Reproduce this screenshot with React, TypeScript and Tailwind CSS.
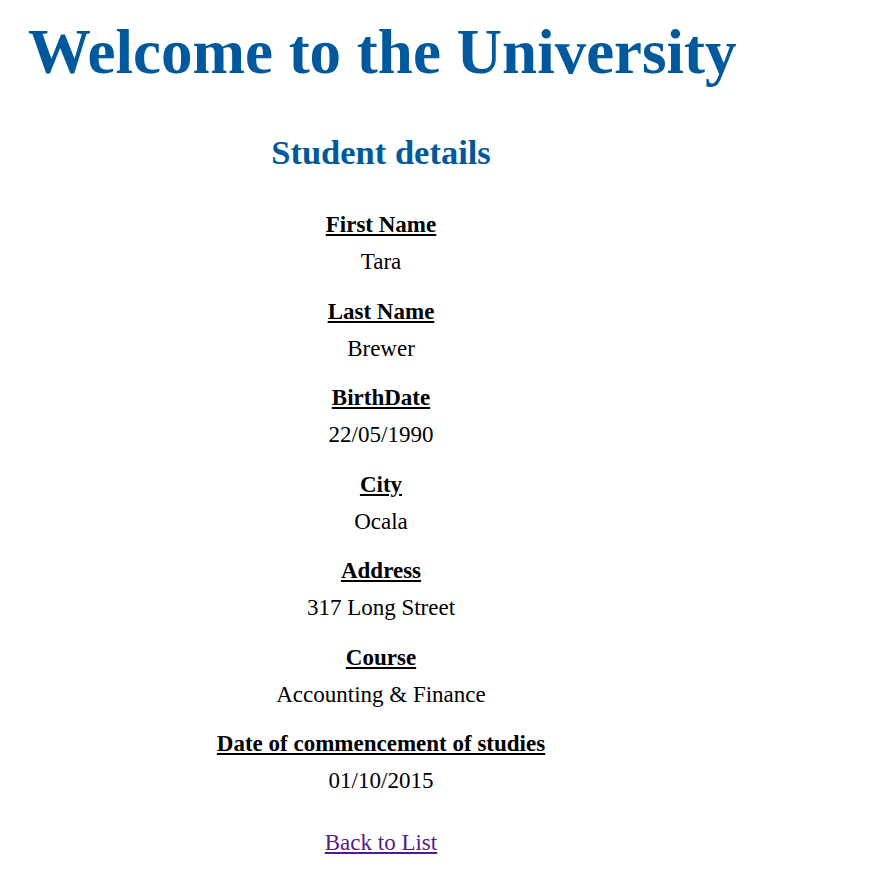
const details = [
  { label: "First Name", value: "Tara" },
  { label: "Last Name", value: "Brewer" },
  { label: "BirthDate", value: "22/05/1990" },
  { label: "City", value: "Ocala" },
  { label: "Address", value: "317 Long Street" },
  { label: "Course", value: "Accounting & Finance" },
  { label: "Date of commencement of studies", value: "01/10/2015" },
];

export default function App() {
  return (
    <div className="min-h-screen bg-white font-['Liberation_Serif',serif] text-black">
      <h1 className="pl-[28px] pt-[12px] text-[63px] font-bold leading-[80px] text-[#00599c]">
        Welcome to the University
      </h1>
      <div className="w-[762px] text-center">
        <h2 className="mt-[40px] text-[34.5px] font-bold leading-[40px] text-[#00599c]">
          Student details
        </h2>
        <dl className="mt-[40px] flex flex-col gap-[23.5px] text-[23px] leading-[26px]">
          {details.map((item) => (
            <div key={item.label} className="flex flex-col gap-[11px]">
              <dt className="font-bold underline">{item.label}</dt>
              <dd>{item.value}</dd>
            </div>
          ))}
        </dl>
        <a
          href="#"
          className="mt-[36px] inline-block text-[23px] leading-[26px] text-[#551a8b] underline"
        >
          Back to List
        </a>
      </div>
    </div>
  );
}
